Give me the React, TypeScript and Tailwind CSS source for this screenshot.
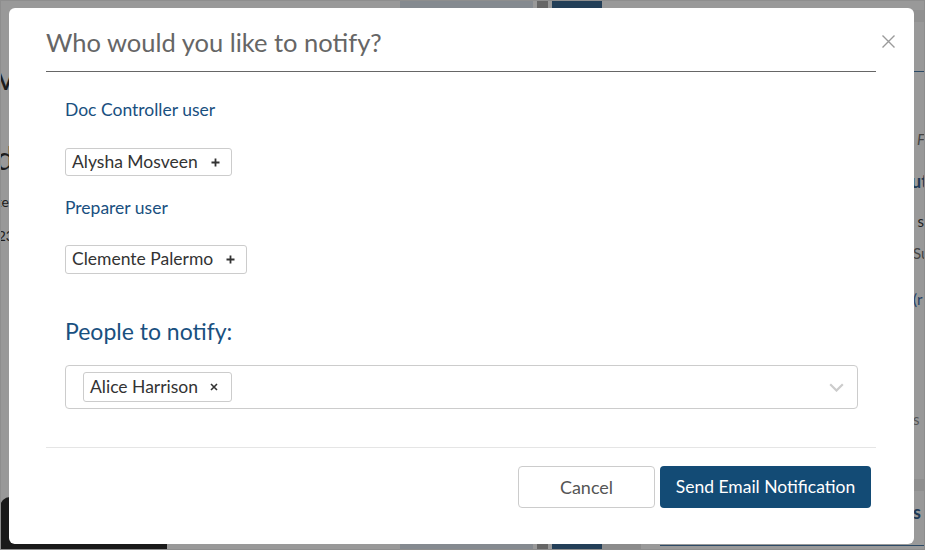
import React from "react";

function Backdrop() {
  return (
    <div className="flex h-full flex-col">
      <div className="flex h-[8px] shrink-0 pt-[1px]">
        <div className="w-[400px]" />
        <div className="w-[133px] bg-[#858a90]" />
        <div className="ml-[4px] w-[11px] bg-[#666]" />
        <div className="ml-[4px] w-[50px] bg-[#233f58]" />
      </div>
      <div className="flex min-h-0 flex-1">
        <div className="flex w-[14px] flex-col overflow-hidden text-[#1c1c1c]">
          <div className="mt-[50px] flex justify-end whitespace-nowrap text-[32px] leading-[40px]">Rlv</div>
          <div className="mt-[40px] flex justify-end whitespace-nowrap text-[32px] leading-[40px]">ad</div>
          <div className="mt-[14px] flex justify-end whitespace-nowrap text-[14px] leading-[20px]">ter</div>
          <div className="mt-[14px] flex justify-end whitespace-nowrap text-[14px] leading-[20px]">23</div>
          <div className="mt-auto h-[47px] rounded-tl-[10px] bg-[#1a1a1a]" />
        </div>
        <div className="flex-1" />
        <div className="flex w-[12px] flex-col overflow-hidden">
          <div className="mt-[2px] h-[12px] bg-[#919191]" />
          <div className="mt-[49px] h-[1px] bg-[#2c4a66]" />
          <div className="mt-[57px] -ml-[3px] whitespace-nowrap text-[15px] italic leading-[20px] text-[#444]">. F</div>
          <div className="mt-[20px] -ml-[2px] whitespace-nowrap text-[18px] font-bold leading-[24px] text-[#1f3a55]">ut</div>
          <div className="mt-[18px] -ml-[3px] whitespace-nowrap text-[15px] leading-[20px] text-[#222]">: s</div>
          <div className="mt-[12px] whitespace-nowrap text-[15px] leading-[20px] text-[#444]">Su</div>
          <div className="mt-[26px] whitespace-nowrap text-[15px] leading-[20px] text-[#1f3f66]">(r</div>
          <div className="mt-[100px] whitespace-nowrap text-[15px] leading-[20px] text-[#555]">s</div>
          <div className="mt-[50px] h-[12px] bg-[#8f8f8f]" />
          <div className="mt-[10px] whitespace-nowrap text-[18px] font-bold leading-[22px] text-[#1f3a55]">s</div>
        </div>
      </div>
      <div className="flex h-[6px] shrink-0">
        <div className="w-[167px] bg-[#1a1a1a]" />
        <div className="w-[233px]" />
        <div className="w-[133px] bg-[#858a90]" />
        <div className="ml-[4px] w-[11px] bg-[#666]" />
        <div className="ml-[4px] w-[50px] bg-[#233f58]" />
        <div className="w-[39px] bg-[#8c8c8c]" />
        <div className="ml-[19px] flex-1 pt-[1px]">
          <div className="h-[1px] bg-[#2c4a66]" />
        </div>
      </div>
    </div>
  );
}

function Chip({ name, action, className }: { name: string; action: "add" | "remove"; className?: string }) {
  return (
    <div
      className={
        "inline-flex items-center rounded-[3px] border border-[#cccccc] bg-white pl-[6px] text-[17.5px] text-[#333] " +
        (className ?? "")
      }
    >
      <span>{name}</span>
      {action === "add" ? (
        <svg className="ml-[13px] mr-[11px]" width="9" height="9" viewBox="0 0 9 9">
          <path d="M4.5 0.5v8M0.5 4.5h8" stroke="#333" strokeWidth="1.8" />
        </svg>
      ) : (
        <svg className="ml-[12px] mr-[13px]" width="8" height="8" viewBox="0 0 8 8">
          <path d="M1 1l6 6M7 1l-6 6" stroke="#333" strokeWidth="1.6" />
        </svg>
      )}
    </div>
  );
}

export default function App() {
  return (
    <div className="relative h-[550px] w-[925px] overflow-hidden bg-[#999] font-['Lato',sans-serif]">
      <Backdrop />
      <div className="absolute left-[9px] top-[8px] flex h-[536px] w-[905px] flex-col rounded-[6px] bg-white">
        <div className="ml-[37px] mr-[38px] border-b border-[#666] pb-[11px] pt-[16px]">
          <h1 className="text-[25.5px] leading-[36px] text-[#666]">Who would you like to notify?</h1>
        </div>
        <button className="absolute right-[19px] top-[27px] h-[13px] w-[13px]" aria-label="Close">
          <svg width="13" height="13" viewBox="0 0 13 13">
            <path d="M0.5 0.5l12 12M12.5 0.5l-12 12" stroke="#9a9a9a" strokeWidth="1.4" />
          </svg>
        </button>

        <div className="flex flex-col items-start px-[56px] pt-[26px]">
          <div className="text-[17.5px] leading-[24px] text-[#19507f]">Doc Controller user</div>
          <Chip name="Alysha Mosveen" action="add" className="mt-[26px] h-[28px]" />
          <div className="mt-[20px] text-[17.5px] leading-[24px] text-[#19507f]">Preparer user</div>
          <Chip name="Clemente Palermo" action="add" className="mt-[25px] h-[29px]" />
          <div className="mt-[41px] text-[23px] leading-[32px] text-[#19507f]">People to notify:</div>
          <div className="mt-[18px] flex h-[44px] w-full items-center rounded-[4px] border border-[#cccccc] pl-[17px] pr-[13px]">
            <Chip name="Alice Harrison" action="remove" className="h-[30px]" />
            <div className="flex-1" />
            <svg width="15" height="9" viewBox="0 0 15 9">
              <path d="M1.2 1.2l6.3 6.3 6.3-6.3" fill="none" stroke="#cccccc" strokeWidth="2.2" />
            </svg>
          </div>
        </div>

        <div className="ml-[37px] mr-[38px] mt-[38px] flex justify-end gap-[5px] border-t border-[#e5e5e5] pr-[5px] pt-[18px]">
          <button className="h-[42px] w-[137px] rounded-[4px] border border-[#cccccc] bg-white text-[18px] text-[#555]">
            Cancel
          </button>
          <button className="h-[42px] w-[211px] rounded-[4px] bg-[#134b75] text-[17.5px] text-white">
            Send Email Notification
          </button>
        </div>
      </div>
      <div className="pointer-events-none absolute inset-0 border border-[#8e8e8e]" />
    </div>
  );
}
